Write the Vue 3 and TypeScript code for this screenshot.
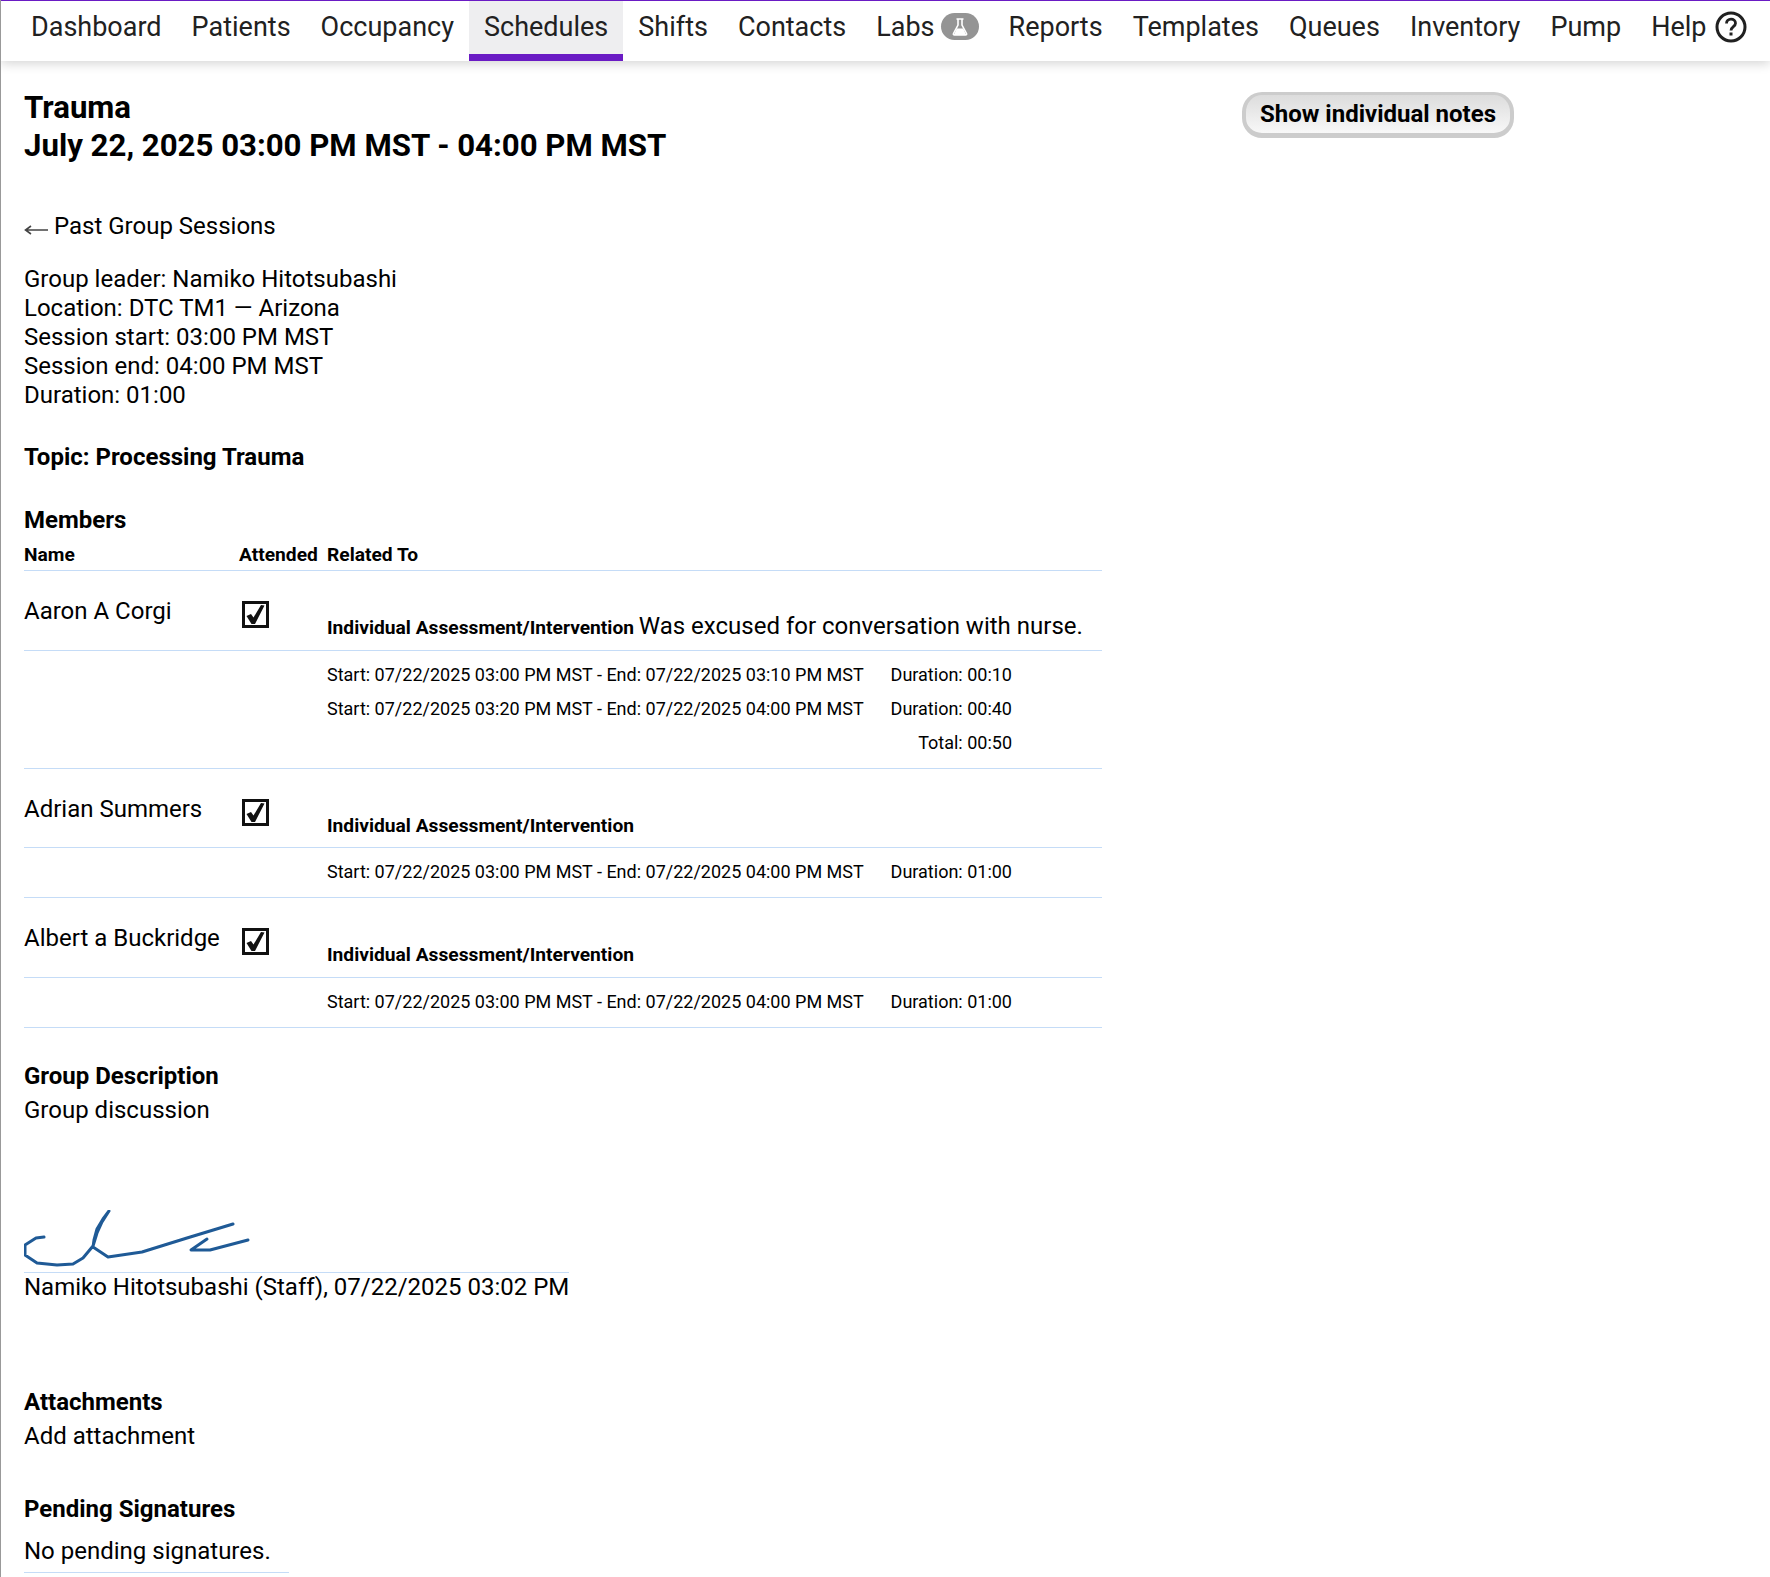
<script setup lang="ts">
const tabs = ['Dashboard', 'Patients', 'Occupancy', 'Schedules', 'Shifts', 'Contacts', 'Labs', 'Reports', 'Templates', 'Queues', 'Inventory', 'Pump', 'Help'];

const info = [
  'Group leader: Namiko Hitotsubashi',
  'Location: DTC TM1 — Arizona',
  'Session start: 03:00 PM MST',
  'Session end: 04:00 PM MST',
  'Duration: 01:00',
];

const members = [
  {
    name: 'Aaron A Corgi',
    note: 'Was excused for conversation with nurse.',
    sessions: [
      { range: 'Start: 07/22/2025 03:00 PM MST - End: 07/22/2025 03:10 PM MST', duration: 'Duration: 00:10' },
      { range: 'Start: 07/22/2025 03:20 PM MST - End: 07/22/2025 04:00 PM MST', duration: 'Duration: 00:40' },
      { range: '', duration: 'Total: 00:50' },
    ],
  },
  {
    name: 'Adrian Summers',
    note: '',
    sessions: [{ range: 'Start: 07/22/2025 03:00 PM MST - End: 07/22/2025 04:00 PM MST', duration: 'Duration: 01:00' }],
  },
  {
    name: 'Albert a Buckridge',
    note: '',
    sessions: [{ range: 'Start: 07/22/2025 03:00 PM MST - End: 07/22/2025 04:00 PM MST', duration: 'Duration: 01:00' }],
  },
];
</script>

<template>
  <div class="page">
    <nav class="nav">
      <a v-for="tab in tabs" :key="tab" class="tab" :class="{ active: tab === 'Schedules' }">
        {{ tab }}
        <span v-if="tab === 'Labs'" class="labs-badge">
          <svg width="16" height="18" viewBox="0 0 16 18">
            <path d="M4.500 1h7M6 1.500v5.500L1.500 15.500c-.4 1 0 1.500 1 1.500h11c1 0 1.400-.5 1-1.500L10 7V1.500" fill="none" stroke="#fff" stroke-width="1.600" />
            <path d="M4.800 10.500h6.400l3 6.500H1.800z" fill="#fff" />
          </svg>
        </span>
        <svg v-if="tab === 'Help'" class="help-icon" width="32" height="32" viewBox="0 0 32 32">
          <circle cx="16" cy="16" r="14" fill="none" stroke="#212121" stroke-width="3" />
          <path d="M11.500 12.500c0-2.600 2-4.300 4.500-4.300s4.500 1.700 4.500 4c0 3.400-4.500 3.400-4.500 7.300" fill="none" stroke="#212121" stroke-width="2.800" />
          <rect x="14.500" y="21.500" width="3" height="3" fill="#212121" />
        </svg>
      </a>
    </nav>

    <main class="content">
      <div class="head">
        <h1 class="title">Trauma<br />July 22, 2025 03:00 PM MST - 04:00 PM MST</h1>
        <button class="notes-btn">Show individual notes</button>
      </div>

      <a class="back">
        <svg class="arrow" width="24" height="12" viewBox="0 0 24 12">
          <path d="M24 6H2M7 2L1.500 6 7 10" fill="none" stroke="#444" stroke-width="1.600" />
        </svg>
        Past Group Sessions
      </a>

      <div class="info">
        <div v-for="line in info" :key="line">{{ line }}</div>
      </div>

      <h2 class="topic">Topic: Processing Trauma</h2>

      <h2 class="members-title">Members</h2>
      <div class="table">
        <div class="row header">
          <div>Name</div>
          <div>Attended</div>
          <div>Related To</div>
        </div>
        <template v-for="member in members" :key="member.name">
          <div class="row member">
            <div class="name">{{ member.name }}</div>
            <div>
              <svg class="check" width="27" height="27" viewBox="0 0 27 27">
                <rect x="1.500" y="1.500" width="24" height="24" fill="#fff" stroke="#111" stroke-width="3" />
                <path d="M4.500 15L9 13 11.500 16.500 19 4 22.500 4.500 13 23 9.500 23Z" fill="#111" />
              </svg>
            </div>
            <div class="related"><b>Individual Assessment/Intervention</b> <span class="note">{{ member.note }}</span></div>
          </div>
          <div class="sessions">
            <div v-for="(s, i) in member.sessions" :key="i" class="session">
              <span>{{ s.range }}</span>
              <span>{{ s.duration }}</span>
            </div>
          </div>
        </template>
      </div>

      <section class="description">
        <h2>Group Description</h2>
        <p>Group discussion</p>
      </section>

      <div class="signature">
        <svg width="252" height="62" viewBox="0 0 252 62">
          <g fill="none" stroke="#1f5a96" stroke-width="3" stroke-linejoin="round" stroke-linecap="round">
            <path d="M20 27L12 28 1 35 1 45 13 53 33 55 49 54 59 48 69 36 73 23 78 12 85 1 79 9 73 19 70 30 69 37 84 47 118 42 163 28 209 14" />
            <path d="M183 29L167 40 186 40 224 30" />
          </g>
        </svg>
        <div class="signer">Namiko Hitotsubashi (Staff), 07/22/2025 03:02 PM</div>
      </div>

      <section class="attachments">
        <h2>Attachments</h2>
        <p>Add attachment</p>
      </section>

      <section class="pending">
        <h2>Pending Signatures</h2>
        <p>No pending signatures.</p>
      </section>
    </main>
  </div>
</template>

<style scoped>
.page {
  font-family: Roboto, "Liberation Sans", sans-serif;
  font-size: 24px;
  line-height: 29px;
  color: #000;
  border-left: 1px solid #999;
  height: 1577px;
  overflow: hidden;
  box-sizing: border-box;
}

.nav {
  display: flex;
  height: 61px;
  padding-left: 15px;
  border-top: 1px solid #6a1bc4;
  box-sizing: border-box;
  box-shadow: 0 3px 10px rgba(0, 0, 0, 0.16);
  background: #fff;
}

.tab {
  display: flex;
  align-items: flex-start;
  padding: 10px 15px 0;
  font-size: 27px;
  line-height: 32px;
  color: #212121;
  white-space: nowrap;
}

.tab.active {
  background: #eeeef0;
  border-bottom: 7px solid #6a1bc4;
}

.labs-badge {
  display: flex;
  align-items: center;
  justify-content: center;
  width: 38px;
  height: 27px;
  margin: 2px 0 0 6px;
  border-radius: 14px;
  background: #949494;
}

.help-icon {
  margin: 0 0 0 9px;
}

.content {
  padding: 28px 0 0 23px;
}

.head {
  display: flex;
  width: 1490px;
  justify-content: space-between;
  align-items: flex-start;
}

.title {
  margin: 0;
  font-size: 31.2px;
  line-height: 38px;
  font-weight: 700;
}

.notes-btn {
  margin-top: 3px;
  height: 46px;
  width: 272px;
  padding: 0;
  font-family: inherit;
  font-size: 24px;
  font-weight: 700;
  color: #000;
  border: 4px solid #ccc;
  border-top-width: 3px;
  border-bottom-width: 5px;
  border-radius: 20px;
  background: linear-gradient(#dcdcdc, #f8f8f8);
}

.back {
  display: block;
  margin-top: 47px;
}

.arrow {
  vertical-align: -2px;
}

.info {
  margin-top: 24px;
}

h2 {
  margin: 0;
  font-size: 24px;
  line-height: 29px;
  font-weight: 700;
}

.topic {
  margin-top: 33px;
}

.members-title {
  margin-top: 34px;
}

.table {
  width: 1078px;
  margin-top: 8px;
}

.row {
  display: grid;
  grid-template-columns: 215px 88px 1fr;
  border-bottom: 1px solid #c5dcf7;
}

.header {
  font-size: 19.2px;
  font-weight: 700;
  line-height: 24px;
  padding-bottom: 3px;
}

.member {
  height: 79.5px;
  box-sizing: border-box;
  padding-top: 26px;
}

.check {
  display: block;
  margin: 4px 0 0 3px;
}

.related {
  font-size: 19.2px;
  padding-top: 15px;
}

.note {
  font-size: 24px;
}

.sessions {
  padding: 7px 0 8px 303px;
  border-bottom: 1px solid #c5dcf7;
  font-size: 18px;
  line-height: 34px;
}

.session {
  display: flex;
  justify-content: space-between;
  padding-right: 90px;
  white-space: nowrap;
}

.description {
  margin-top: 34px;
}

.description p,
.attachments p,
.pending p {
  margin: 5px 0 0;
}

.signature {
  margin-top: 85px;
}

.signature svg {
  display: block;
}

.signer {
  display: inline-block;
  border-top: 1px solid #c5dcf7;
}

.attachments {
  margin-top: 86px;
}

.pending {
  margin-top: 44px;
}

.pending p {
  display: inline-block;
  width: 265px;
  margin-top: 13px;
  padding-bottom: 6px;
  border-bottom: 1px solid #c5dcf7;
}
</style>
